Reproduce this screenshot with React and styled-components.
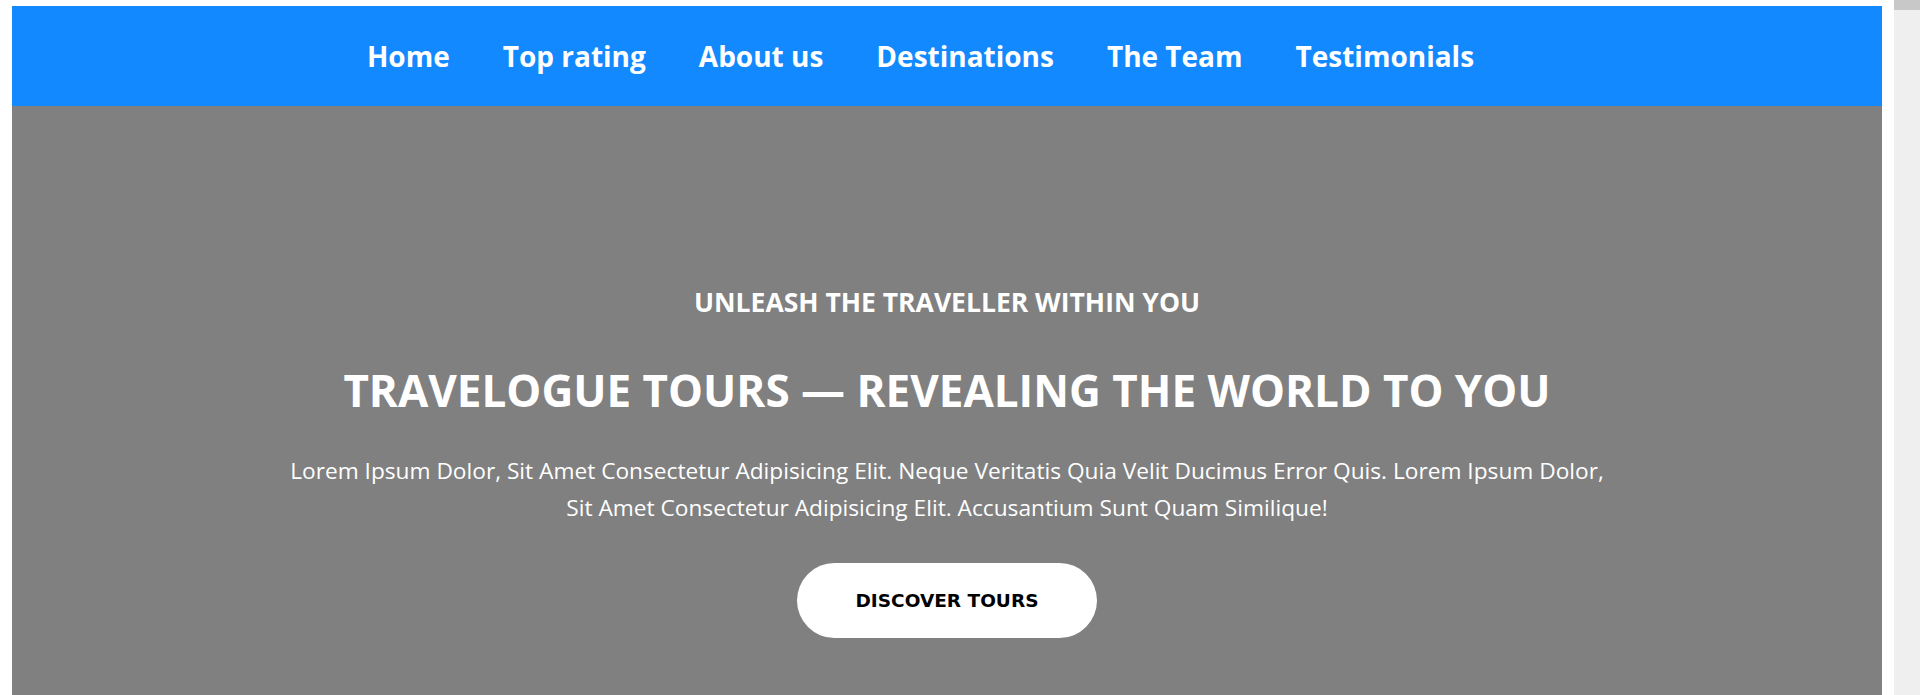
import React from 'react';
import styled, { createGlobalStyle } from 'styled-components';

const links = ['Home', 'Top rating', 'About us', 'Destinations', 'The Team', 'Testimonials'];

export default function App() {
  return (
    <>
      <GlobalStyle />
      <Page>
        <NavBar>
          <NavList>
            {links.map(link => (
              <NavItem key={link}>
                <NavLink href="#">{link}</NavLink>
              </NavItem>
            ))}
          </NavList>
        </NavBar>
        <Hero>
          <Tagline>Unleash the traveller within you</Tagline>
          <Title>Travelogue tours — revealing the world to you</Title>
          <Lead>
            lorem ipsum dolor, sit amet consectetur adipisicing elit. neque veritatis quia velit
            ducimus error quis. lorem ipsum dolor, sit amet consectetur adipisicing elit.
            accusantium sunt quam similique!
          </Lead>
          <CallToAction>Discover tours</CallToAction>
        </Hero>
      </Page>
    </>
  );
}

// the window's scrollbar strip (track + thumb at the top) is painted on the root background
const GlobalStyle = createGlobalStyle`
  html {
    min-height: 100%;
    background:
      linear-gradient(#c8c8c8, #c8c8c8) right top / 26px 10px no-repeat,
      linear-gradient(to right, #fff calc(100% - 26px), #efefef 0);
  }
  body {
    margin: 6px 38px 0 12px;
    font-family: "Open Sans", "Noto Sans", sans-serif;
  }
  * {
    box-sizing: border-box;
  }
`;

const Page = styled.div`
  display: flex;
  flex-direction: column;
`;

const NavBar = styled.nav`
  height: 100px;
  background: #1289ff;
  display: flex;
  align-items: center;
  justify-content: center;
`;

const NavList = styled.ul`
  list-style: none;
  margin: 0;
  padding: 0;
  display: flex;
`;

const NavItem = styled.li`
  margin-right: 53px;
`;

const NavLink = styled.a`
  color: #fff;
  text-decoration: none;
  font-weight: 700;
  font-size: 28px;
`;

const Hero = styled.header`
  min-height: 900px;
  background: #808080;
  color: #fff;
  display: flex;
  flex-direction: column;
  align-items: center;
  text-align: center;
  padding-top: 178px;
`;

const Tagline = styled.h3`
  margin: 0;
  font-size: 26.5px;
  font-weight: 700;
  text-transform: uppercase;
`;

const Title = styled.h1`
  margin: 40px 0 0;
  font-size: 44px;
  font-weight: 700;
  text-transform: uppercase;
`;

const Lead = styled.p`
  margin: 32px 0 0;
  max-width: 1335px;
  font-size: 22.7px;
  line-height: 37px;
  text-transform: capitalize;
`;

const CallToAction = styled.button`
  margin-top: 37px;
  width: 300px;
  height: 75px;
  border: none;
  border-radius: 38px;
  background: #fff;
  color: #000;
  font-family: "DejaVu Sans", Verdana, sans-serif;
  font-weight: 700;
  font-size: 18.5px;
  text-transform: uppercase;
  cursor: pointer;
`;
